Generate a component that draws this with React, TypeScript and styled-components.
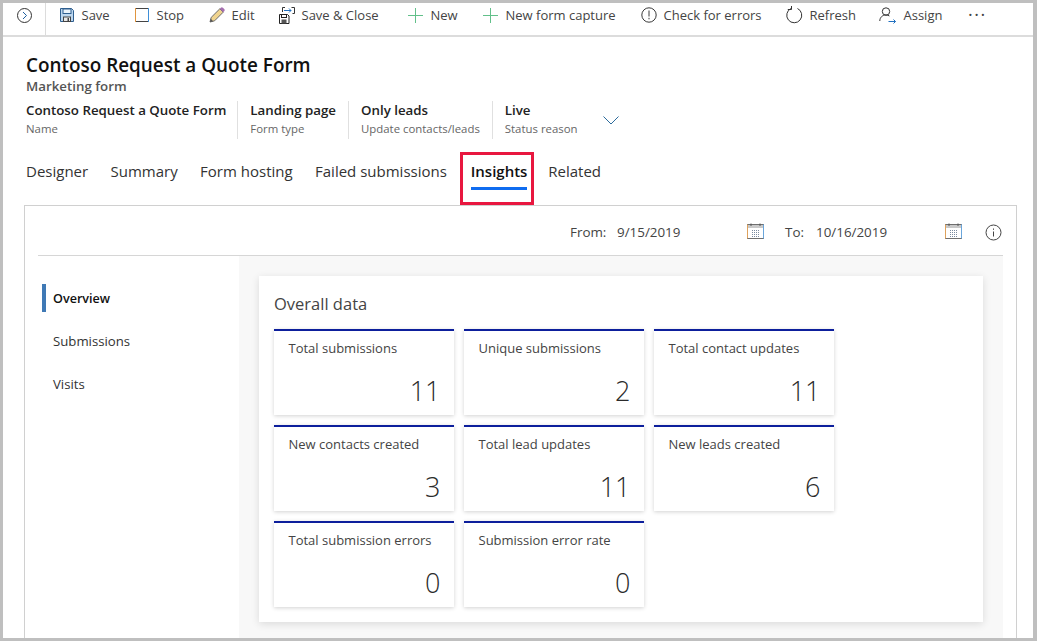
import React from "react";
import styled, { createGlobalStyle } from "styled-components";

const GlobalStyle = createGlobalStyle`
	html, body {
		margin: 0;
		padding: 0;
		background: #fff;
	}
	body {
		font-family: "Open Sans", "Noto Sans", sans-serif;
		color: #323130;
	}
`;

const tabs = ["Designer", "Summary", "Form hosting", "Failed submissions", "Insights", "Related"];

const fields = [
	{ value: "Contoso Request a Quote Form", label: "Name" },
	{ value: "Landing page", label: "Form type" },
	{ value: "Only leads", label: "Update contacts/leads" },
	{ value: "Live", label: "Status reason" },
];

const tiles = [
	{ title: "Total submissions", value: "11" },
	{ title: "Unique submissions", value: "2" },
	{ title: "Total contact updates", value: "11" },
	{ title: "New contacts created", value: "3" },
	{ title: "Total lead updates", value: "11" },
	{ title: "New leads created", value: "6" },
	{ title: "Total submission errors", value: "0" },
	{ title: "Submission error rate", value: "0" },
];

const SaveIcon = () => (
	<svg width="16" height="16" viewBox="0 0 16 16" fill="none">
		<path d="M1.5 1.5h11l2 2v11h-13z" fill="#bcd6ee" stroke="#2f5f8f" />
		<rect x="4" y="2" width="8" height="4.5" fill="#eaf3fb" stroke="#2f5f8f" />
		<rect x="4.5" y="10" width="7" height="4.5" fill="#e8e8e8" stroke="#444" />
		<rect x="8.5" y="11" width="1.5" height="3" fill="#444" />
	</svg>
);

const StopIcon = () => (
	<svg width="16" height="16" viewBox="0 0 16 16" fill="none">
		<rect x="1.5" y="1.5" width="13" height="13" stroke="#444" />
		<path d="M1.5 1v14" stroke="#e0953f" />
		<path d="M14.5 1v14" stroke="#3f8fd8" />
	</svg>
);

const EditIcon = () => (
	<svg width="16" height="16" viewBox="0 0 16 16" fill="none">
		<path d="M1 15l1.2-4.6L10.8 1.8l3.4 3.4L5.600 13.800z" fill="#f0d48f" stroke="#6b6b6b" strokeLinejoin="round" />
		<path d="M1 15l.8-3.2 2.4 2.4z" fill="#555" />
		<path d="M10.8 1.8l1-1a1.5 1.5 0 0 1 2.1 0l1.3 1.3a1.5 1.5 0 0 1 0 2.1l-1 1z" fill="#a56fb0" />
	</svg>
);

const SaveCloseIcon = () => (
	<svg width="16" height="17" viewBox="0 0 16 17" fill="none">
		<path d="M.5 7.5h8l1.5 1.5v7.5H.5z" fill="#fff" stroke="#222" />
		<rect x="2.5" y="7.5" width="5" height="3" stroke="#222" />
		<rect x="2.5" y="12.5" width="5" height="4" fill="#555" />
		<path d="M3.5 5V.5H6" stroke="#333" />
		<path d="M12.5.5h3v6h-2" stroke="#333" />
		<path d="M5 3.5h7M10 1.5l2 2-2 2" stroke="#1f6fc0" />
	</svg>
);

const PlusIcon = () => (
	<svg width="17" height="17" viewBox="0 0 17 17" fill="none">
		<path d="M8.5 1v15M1 8.5h15" stroke="#62c08a" />
	</svg>
);

const AlertIcon = () => (
	<svg width="16" height="16" viewBox="0 0 16 16" fill="none">
		<circle cx="8" cy="8" r="7.2" stroke="#3a3a3a" />
		<path d="M8 3.5v6M8 10.8v1.5" stroke="#3a3a3a" />
	</svg>
);

const RefreshIcon = () => (
	<svg width="17" height="18" viewBox="0 0 17 18" fill="none">
		<path d="M11.5 2.5a7.5 7.5 0 1 1-6.5 0" stroke="#333" />
		<path d="M5.5 0v3.5H1.8" stroke="#333" />
	</svg>
);

const AssignIcon = () => (
	<svg width="18" height="17" viewBox="0 0 18 17" fill="none">
		<circle cx="7" cy="4.5" r="3.7" stroke="#333" />
		<path d="M.8 14c0-3.5 2.5-6 6.2-6 1.3 0 2.5.3 3.4 1" stroke="#333" />
		<path d="M9.5 14.5h7M14.5 12.5l2 2-2 2" stroke="#1f6fc0" />
	</svg>
);

const CalendarIcon = () => (
	<CalendarSlot>
		<svg width="17" height="16" viewBox="0 0 17 16" fill="none">
			<rect x="0.5" y="1.5" width="16" height="14" fill="#fff" stroke="#6f6f6f" />
			<path d="M1 2h15v3H1z" fill="#c9c9c9" />
			<path d="M.5 1.5v14" stroke="#dfa25c" />
			<path d="M16.5 1.5v14" stroke="#6aa6dc" />
			<path d="M4 .5V3M13 .5V3" stroke="#555" />
			<path d="M5 7.5h8M5 9.5h8M5 11.5h8M5 13.5h8" stroke="#7a8ba0" strokeDasharray="1 1" />
		</svg>
	</CalendarSlot>
);

const InfoIcon = () => (
	<svg width="17" height="17" viewBox="0 0 17 17" fill="none">
		<circle cx="8.5" cy="8.5" r="7.5" stroke="#444" />
		<path d="M8.5 7.5v5M8.5 4.5v1.3" stroke="#444" />
	</svg>
);

const toolbarItems = [
	{ label: "Save", icon: <SaveIcon />, width: 75 },
	{ label: "Stop", icon: <StopIcon />, width: 75 },
	{ label: "Edit", icon: <EditIcon />, width: 70 },
	{ label: "Save & Close", icon: <SaveCloseIcon />, width: 128 },
	{ label: "New", icon: <PlusIcon />, width: 75 },
	{ label: "New form capture", icon: <PlusIcon />, width: 159 },
	{ label: "Check for errors", icon: <AlertIcon />, width: 145 },
	{ label: "Refresh", icon: <RefreshIcon />, width: 93 },
	{ label: "Assign", icon: <AssignIcon />, width: 89 },
];

export default function App() {
	return (
		<Frame>
			<GlobalStyle />
			<Toolbar>
				<ExpandCell>
					<ExpandButton>
						<svg width="9" height="9" viewBox="0 0 9 9" fill="none">
							<path d="M3 1l3.5 3.5L3 8" stroke="#1f5f9f" />
						</svg>
					</ExpandButton>
				</ExpandCell>
				{toolbarItems.map((item) => (
					<ToolButton key={item.label} $width={item.width}>
						<IconSlot>{item.icon}</IconSlot>
						{item.label}
					</ToolButton>
				))}
				<More>···</More>
			</Toolbar>

			<Header>
				<Title>Contoso Request a Quote Form</Title>
				<Subtitle>Marketing form</Subtitle>
				<Fields>
					{fields.map((field) => (
						<Field key={field.label}>
							<FieldValue>{field.value}</FieldValue>
							<FieldLabel>{field.label}</FieldLabel>
						</Field>
					))}
					<Chevron width="16" height="9" viewBox="0 0 16 9" fill="none">
						<path d="M.5.5L8 8 15.5.5" stroke="#2b6a9b" />
					</Chevron>
				</Fields>
			</Header>

			<Tabs>
				{tabs.map((tab) => (
					<Tab key={tab} $active={tab === "Insights"}>
						{tab}
					</Tab>
				))}
			</Tabs>

			<Panel>
				<DateBar>
					<DateLabel $width={47}>From:</DateLabel>
					<DateValue $width={130}>9/15/2019</DateValue>
					<CalendarIcon />
					<DateLabel $width={31} $left={21}>
						To:
					</DateLabel>
					<DateValue $width={129}>10/16/2019</DateValue>
					<CalendarIcon />
					<InfoSlot>
						<InfoIcon />
					</InfoSlot>
				</DateBar>
				<Body>
					<SideNav>
						<NavItem $active>Overview</NavItem>
						<NavItem>Submissions</NavItem>
						<NavItem>Visits</NavItem>
					</SideNav>
					<Main>
						<DataCard>
							<CardTitle>Overall data</CardTitle>
							<TileGrid>
								{tiles.map((tile) => (
									<Tile key={tile.title}>
										<TileTitle>{tile.title}</TileTitle>
										<TileValue>{tile.value}</TileValue>
									</Tile>
								))}
							</TileGrid>
						</DataCard>
					</Main>
				</Body>
			</Panel>
		</Frame>
	);
}

const Frame = styled.div`
	box-sizing: border-box;
	width: 1037px;
	height: 641px;
	border: 3px solid #bfbfbf;
	border-right-width: 4px;
	overflow: hidden;
	background: #fff;
	display: flex;
	flex-direction: column;
`;

const Toolbar = styled.div`
	flex: none;
	box-sizing: border-box;
	height: 34px;
	padding-bottom: 8px;
	display: flex;
	align-items: center;
	border-bottom: 2px solid #dcdcdc;
	font-size: 13px;
	color: #444;
`;

const ExpandCell = styled.div`
	flex: none;
	box-sizing: border-box;
	width: 43px;
	height: 32px;
	margin-bottom: -8px;
	padding-bottom: 8px;
	display: flex;
	align-items: center;
	justify-content: center;
	border-right: 1px solid #dcdcdc;
`;

const ExpandButton = styled.div`
	width: 13px;
	height: 13px;
	border: 1px solid #333;
	border-radius: 50%;
	display: flex;
	align-items: center;
	justify-content: center;
`;

const ToolButton = styled.div<{ $width: number }>`
	flex: none;
	box-sizing: border-box;
	width: ${(p) => p.$width}px;
	padding-left: 13px;
	display: flex;
	align-items: center;
	gap: 6.5px;
	white-space: nowrap;
`;

const IconSlot = styled.span`
	display: flex;
	align-items: center;
`;

const More = styled.div`
	font-size: 18px;
	letter-spacing: 1.5px;
	color: #444;
	margin: -3px 0 0 13px;
`;

const Header = styled.div`
	flex: none;
	padding: 15px 0 0 23px;
`;

const Title = styled.div`
	font-size: 18.9px;
	font-weight: 600;
	line-height: 26px;
	color: #111;
`;

const Subtitle = styled.div`
	font-size: 13.3px;
	font-weight: 600;
	line-height: 17px;
	color: #555;
`;

const Fields = styled.div`
	display: flex;
	align-items: flex-start;
	margin-top: 6px;
`;

const Field = styled.div`
	padding: 0 12px;
	height: 38px;
	border-left: 1px solid #e0e0e0;

	&:first-child {
		padding: 0 11px 0 0;
		border-left: none;
	}
`;

const FieldValue = styled.div`
	font-size: 13.3px;
	font-weight: 600;
	line-height: 18px;
	color: #222;
	white-space: nowrap;
`;

const FieldLabel = styled.div`
	font-size: 11.4px;
	line-height: 19px;
	color: #666;
	white-space: nowrap;
`;

const Chevron = styled.svg`
	margin: 15px 0 0 13px;
`;

const Tabs = styled.div`
	flex: none;
	display: flex;
	gap: 22.4px;
	height: 53px;
	margin-top: 13px;
	padding-left: 23px;
`;

const Tab = styled.div<{ $active?: boolean }>`
	position: relative;
	z-index: 1;
	font-size: 15px;
	line-height: 38px;
	color: ${(p) => (p.$active ? "#111" : "#333")};
	font-weight: ${(p) => (p.$active ? 600 : 400)};

	${(p) =>
		p.$active &&
		`
		margin: 0 -1.5px 0 1.5px;

		&::before {
			content: "";
			position: absolute;
			left: 0;
			right: 0;
			top: 35px;
			height: 3px;
			background: #0f6cf0;
		}
		&::after {
			content: "";
			position: absolute;
			left: -11px;
			right: -7px;
			top: 0;
			bottom: 0;
			border: 3px solid #e8173f;
		}
	`}
`;

const Panel = styled.div`
	flex: 1;
	min-height: 0;
	margin: 0 16px 0 21px;
	padding: 0 13px;
	border: 1px solid #d0d0d0;
	border-bottom: none;
	display: flex;
	flex-direction: column;
`;

const DateBar = styled.div`
	flex: none;
	box-sizing: border-box;
	height: 50px;
	padding-top: 3px;
	display: flex;
	align-items: center;
	justify-content: flex-end;
	font-size: 13.4px;
	color: #444;
	border-bottom: 1px solid #d6d6d6;
`;

const DateLabel = styled.span<{ $width: number; $left?: number }>`
	flex: none;
	width: ${(p) => p.$width}px;
	margin-left: ${(p) => p.$left ?? 0}px;
`;

const DateValue = styled.span<{ $width: number }>`
	flex: none;
	width: ${(p) => p.$width}px;
`;

const CalendarSlot = styled.span`
	display: flex;
	margin-top: -3px;
`;

const InfoSlot = styled.span`
	display: flex;
	margin: 0 1px 0 23px;
`;

const Body = styled.div`
	flex: 1;
	min-height: 0;
	display: flex;
`;

const SideNav = styled.div`
	flex: none;
	width: 201px;
	padding-top: 28px;
	display: flex;
	flex-direction: column;
	gap: 15px;
`;

const NavItem = styled.div<{ $active?: boolean }>`
	height: 28px;
	line-height: ${(p) => (p.$active ? "30px" : "28px")};
	font-size: ${(p) => (p.$active ? "12.6px" : "13.2px")};
	font-weight: ${(p) => (p.$active ? 600 : 400)};
	color: ${(p) => (p.$active ? "#111" : "#333")};
	border-left: ${(p) => (p.$active ? "4px solid #3f79b5" : "none")};
	margin-left: ${(p) => (p.$active ? "4px" : "0")};
	padding-left: ${(p) => (p.$active ? "7px" : "15px")};
`;

const Main = styled.div`
	flex: 1;
	min-width: 0;
	background: #f8f8f8;
	padding: 20px;
`;

const DataCard = styled.div`
	height: 346px;
	box-sizing: border-box;
	background: #fff;
	padding: 15px 15px 0;
	box-shadow: 0 2px 8px rgba(0, 0, 0, 0.12);
`;

const CardTitle = styled.div`
	font-size: 16.5px;
	line-height: 26px;
	color: #444;
	margin-bottom: 12px;
`;

const TileGrid = styled.div`
	display: grid;
	grid-template-columns: repeat(3, 180px);
	grid-auto-rows: 86px;
	gap: 10px;
`;

const Tile = styled.div`
	box-sizing: border-box;
	border-top: 2px solid #0d1f9c;
	padding: 8px 15px 0 14.5px;
	background: #fff;
	box-shadow: 0 1px 4px rgba(0, 0, 0, 0.18);
	display: flex;
	flex-direction: column;
	justify-content: space-between;
`;

const TileTitle = styled.div`
	font-size: 13px;
	line-height: 18px;
	color: #444;
`;

const TileValue = styled.div`
	font-size: 27px;
	font-weight: 300;
	line-height: 36px;
	color: #2b2b2b;
	text-align: right;
	margin: 0 -1.5px 6px 0;
`;
